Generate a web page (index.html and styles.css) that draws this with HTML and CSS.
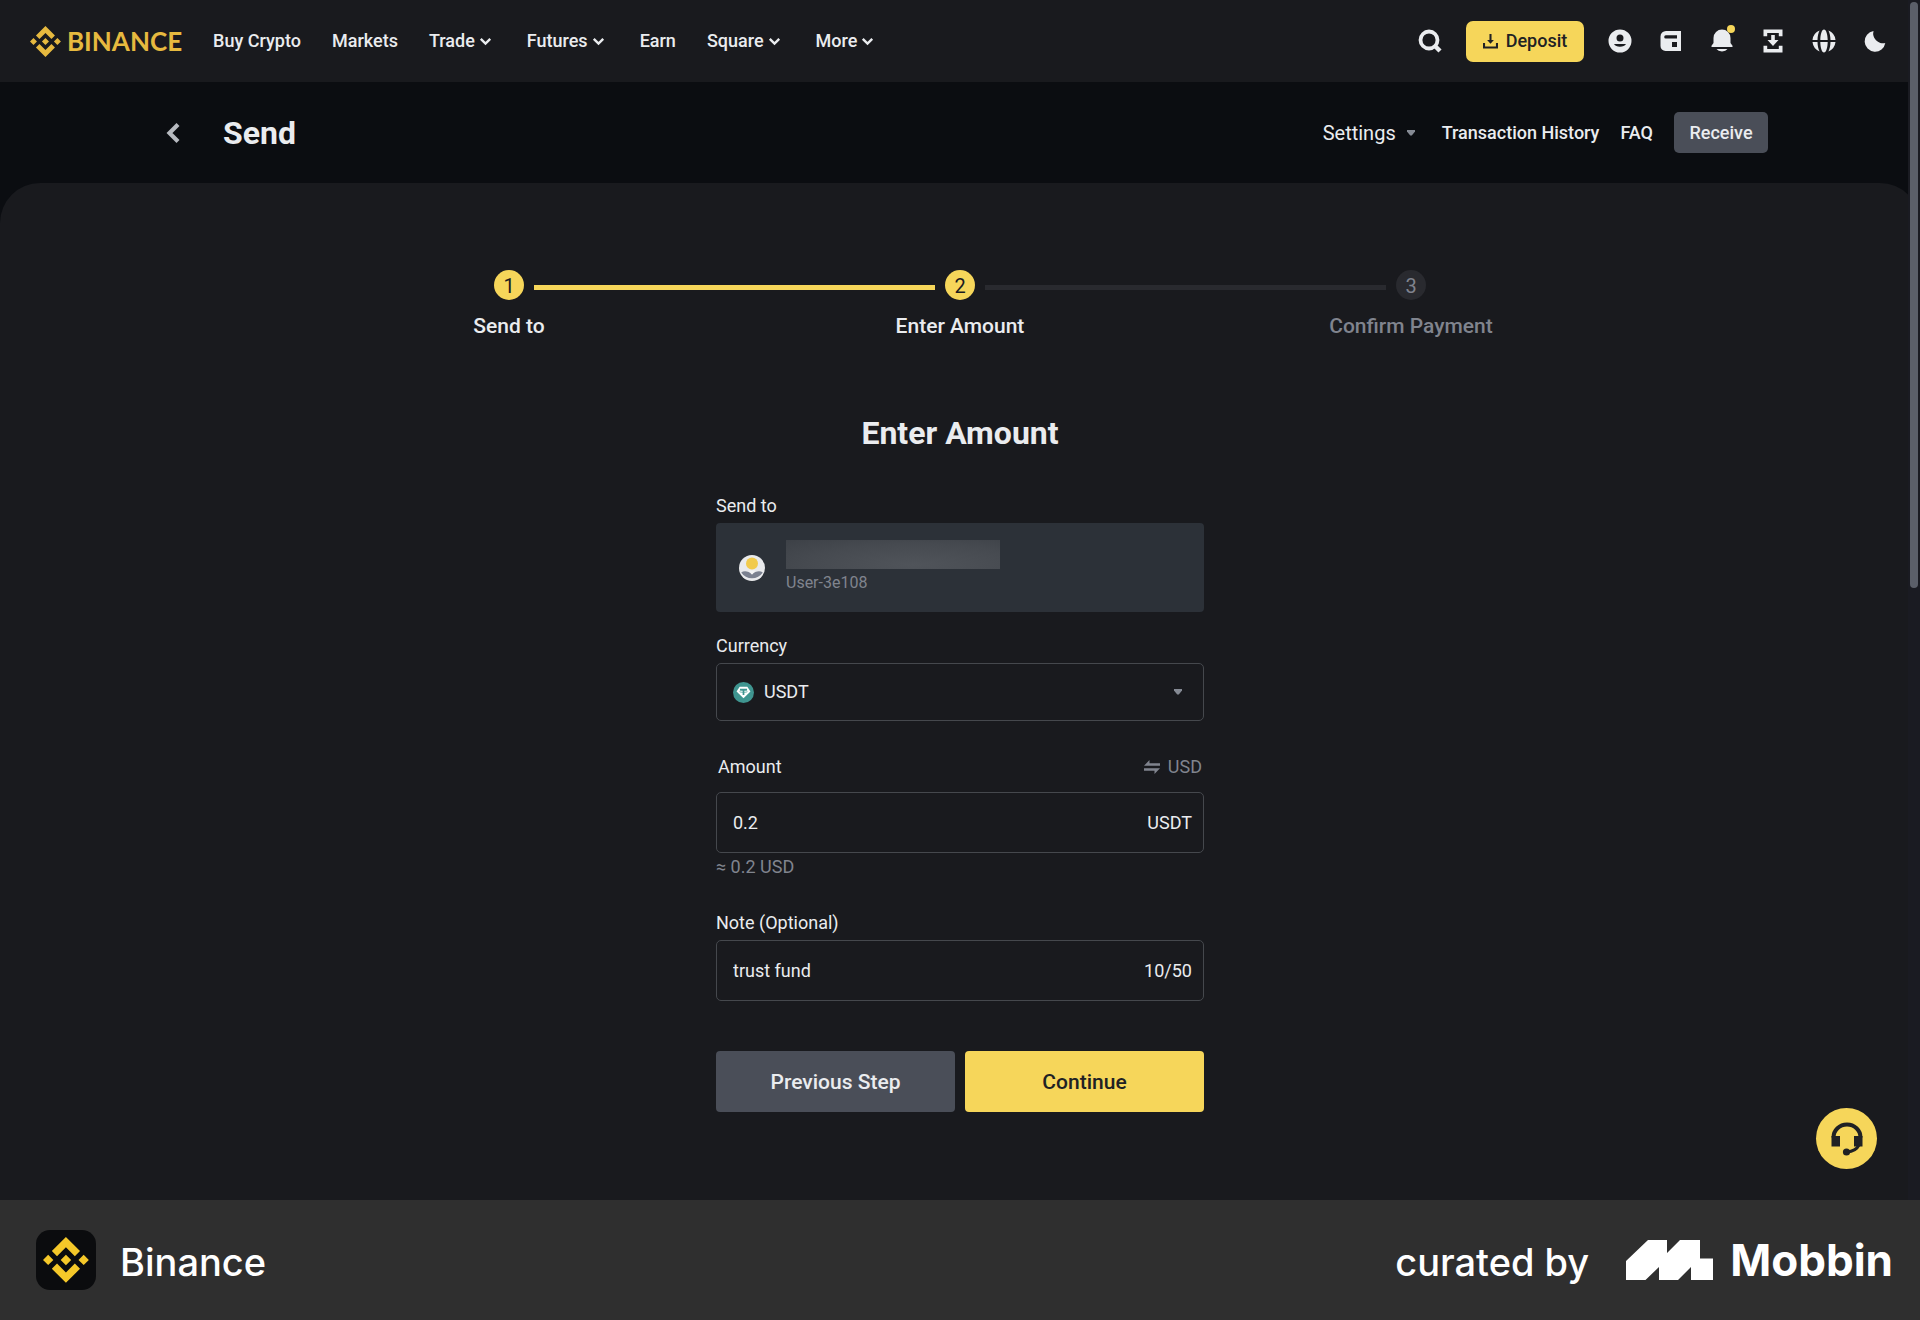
FILE: index.html
```html
<!DOCTYPE html>
<html lang="en">
<head>
<meta charset="utf-8">
<title>Send | Binance</title>
<meta name="viewport" content="width=device-width, initial-scale=1">
<link rel="stylesheet" href="styles.css">
</head>
<body>
<svg class="sprite" aria-hidden="true">
  <symbol id="binance" viewBox="0 0 127 127">
    <path d="M38.7 53.2 63.3 28.6l24.6 24.6 14.3-14.3L63.3 0 24.4 38.9zM0 63.3 14.3 49l14.3 14.3-14.3 14.3zM38.7 73.4 63.3 98l24.6-24.6 14.3 14.3-38.9 38.9-38.9-38.9zM98 63.3 112.3 49l14.3 14.3-14.3 14.3zM77.8 63.3 63.3 48.8 48.8 63.3l14.5 14.5z"/>
  </symbol>
  <symbol id="chevron" viewBox="0 0 20 20">
    <path d="m5.500 7.500 4.500 4.500 4.500-4.500" fill="none" stroke="currentColor" stroke-width="2.300"/>
  </symbol>
  <symbol id="caret" viewBox="0 0 10 6"><path d="M1 0h8v1.500L5.800 5.600H4.200L1 1.500z"/></symbol>
</svg>

<div class="app">
  <header class="topbar">
    <a class="brand" href="#"><svg class="brand-mark"><use href="#binance"/></svg><span>BINANCE</span></a>
    <nav class="menu" aria-label="Main">
      <a href="#">Buy Crypto</a>
      <a href="#">Markets</a>
      <a href="#">Trade<svg><use href="#chevron"/></svg></a>
      <a href="#">Futures<svg><use href="#chevron"/></svg></a>
      <a href="#">Earn</a>
      <a href="#">Square<svg><use href="#chevron"/></svg></a>
      <a href="#">More<svg><use href="#chevron"/></svg></a>
    </nav>
    <div class="actions">
      <button class="icon-btn" type="button" aria-label="Search">
        <svg viewBox="0 0 24 24"><circle cx="11" cy="11" r="8.500" fill="none" stroke="currentColor" stroke-width="3.800"/><path d="m16.500 16.500 5.500 5.500" stroke="currentColor" stroke-width="4.400"/></svg>
      </button>
      <button class="deposit" type="button">
        <svg viewBox="0 0 16 16"><path d="M6.900 0h2.200v6.500h2.500L8 10.400 4.400 6.500h2.500zM0 9.500h2.200v3.800h11.600V9.500H16v6H0z"/></svg>Deposit
      </button>
      <div class="icon-row">
        <button class="icon-btn" type="button" aria-label="Account">
          <svg viewBox="0 0 24 24"><path fill-rule="evenodd" d="M12 .5a11.500 11.500 0 1 0 0 23 11.500 11.500 0 0 0 0-23zm0 5a3.500 3.500 0 1 1 0 7 3.500 3.500 0 0 1 0-7zm-6 9.500h12a6.500 4.300 0 0 1-12 0z"/></svg>
        </button>
        <button class="icon-btn" type="button" aria-label="Wallet">
          <svg viewBox="0 0 24 24"><path fill-rule="evenodd" d="M7 2h15v20H6.500A5 5 0 0 1 1.500 17V7.500A5.500 5.500 0 0 1 7 2zm-.2 4.300a1.600 1.600 0 0 0 0 3.200H18V6.300zM13 13v5h5v-5z"/></svg>
        </button>
        <button class="icon-btn bell" type="button" aria-label="Notifications">
          <svg viewBox="0 0 24 24"><path d="M12 .5a8.500 8.500 0 0 1 8.500 8.500v5l2 2.800V18h-21v-1.200l2-2.800V9A8.500 8.500 0 0 1 12 .5zM6.500 20h11a6 4 0 0 1-11 0z"/></svg>
        </button>
        <button class="icon-btn" type="button" aria-label="Downloads">
          <svg viewBox="0 0 24 24"><path d="M2.500.5h19v6.800h-3.700V4H6.200v3.300H2.500zM2.500 23.500h19v-6.800h-3.700V20H6.200v-3.300H2.500zM10.200 6h3.600v5h3.700L12 17l-5.500-6h3.700z"/></svg>
        </button>
        <button class="icon-btn" type="button" aria-label="Language">
          <svg viewBox="0 0 24 24"><path d="M12 .4c2.200 0 3.600 5 3.700 10.500H8.300C8.400 5.400 9.800.4 12 .4zM12 23.600c-2.200 0-3.600-5-3.700-10.500h7.400c-.1 5.500-1.500 10.500-3.700 10.500zM7.600 1.500A11.500 11.500 0 0 0 .5 10.900h5c.1-3.600.8-7 2.100-9.400zM16.400 1.500a11.500 11.500 0 0 1 7.100 9.400h-5c-.1-3.600-.8-7-2.100-9.400zM7.600 22.500a11.500 11.500 0 0 1-7.100-9.400h5c.1 3.600.8 7 2.100 9.400zM16.400 22.500a11.500 11.500 0 0 0 7.100-9.400h-5c-.1 3.600-.8 7-2.100 9.400z"/></svg>
        </button>
        <button class="icon-btn" type="button" aria-label="Dark mode">
          <svg viewBox="0 0 24 24"><path d="M10.500 2a9.800 9.800 0 0 0 11.800 12A10.400 10.400 0 1 1 10.500 2z"/></svg>
        </button>
      </div>
    </div>
  </header>

  <div class="page-head">
    <div class="page-head-inner">
      <a class="back" href="#" aria-label="Back"><svg viewBox="0 0 14 20"><path d="m12 1.500-8.500 8.500 8.500 8.500" fill="none" stroke="currentColor" stroke-width="4.200"/></svg></a>
      <h1>Send</h1>
      <div class="page-links">
        <button class="settings" type="button">Settings<svg class="caret"><use href="#caret"/></svg></button>
        <a href="#">Transaction History</a>
        <a href="#">FAQ</a>
        <button class="receive" type="button">Receive</button>
      </div>
    </div>
  </div>

  <main class="panel">
    <ol class="steps">
      <li class="step done">
        <div class="track"><i class="line none"></i><span class="dot">1</span><i class="line"></i></div>
        <span>Send to</span>
      </li>
      <li class="step current">
        <div class="track"><i class="line"></i><span class="dot">2</span><i class="line next"></i></div>
        <span>Enter Amount</span>
      </li>
      <li class="step todo">
        <div class="track"><i class="line"></i><span class="dot">3</span><i class="line none"></i></div>
        <span>Confirm Payment</span>
      </li>
    </ol>

    <form class="form">
      <h2>Enter Amount</h2>

      <section class="field">
        <h3 class="label">Send to</h3>
        <div class="recipient">
          <svg class="avatar" viewBox="0 0 26 26">
            <circle cx="13" cy="13" r="13" fill="#e9eaec"/>
            <path d="M2.200 17.500C5 15.500 9.500 16 13 19.500c3.500-3.500 8-4 10.800-2A13 13 0 0 1 2.200 17.500z" fill="#7b8190"/>
            <path d="m9.500 15.500 3.500 4 3.500-4z" fill="#f4f4f5"/>
            <circle cx="13" cy="8.500" r="6" fill="#f1ca4b"/>
          </svg>
          <div class="recipient-text">
            <div class="redacted"></div>
            <span>User-3e108</span>
          </div>
        </div>
      </section>

      <div class="field">
        <label class="label" for="currency">Currency</label>
        <div class="control select">
          <svg class="coin" viewBox="0 0 22 22">
            <circle cx="11" cy="11" r="11" fill="#3f9590"/>
            <path d="M7 5h8l3.300 5L11 17 3.700 10z" fill="#fff"/>
            <path d="M7.300 7.200h7.400v1.700h-2.800v4.600h-1.800V8.900H7.300z" fill="#3f9590"/>
            <ellipse cx="11" cy="10" rx="4" ry="1" fill="none" stroke="#3f9590" stroke-width=".6"/>
          </svg>
          <select id="currency"><option>USDT</option></select>
          <svg class="caret"><use href="#caret"/></svg>
        </div>
      </div>

      <div class="field amount">
        <div class="label-row">
          <label class="label" for="amount">Amount</label>
          <button class="swap" type="button"><svg viewBox="0 0 16 14"><path d="M0 5.800 5.500 0v3.200H16v2.600zM16 8.200 10.500 14v-3.200H0V8.200z"/></svg>USD</button>
        </div>
        <div class="control"><input id="amount" type="text" value="0.2"><span>USDT</span></div>
        <p class="hint">≈ 0.2 USD</p>
      </div>

      <div class="field note">
        <label class="label" for="note">Note (Optional)</label>
        <div class="control"><input id="note" type="text" value="trust fund"><span>10/50</span></div>
      </div>

      <div class="buttons">
        <button class="btn secondary" type="button">Previous Step</button>
        <button class="btn primary" type="submit">Continue</button>
      </div>
    </form>

    <button class="support" type="button" aria-label="Support">
      <svg viewBox="0 0 32 34"><path d="M2.500 15.500a13.500 13 0 0 1 27 0" fill="none" stroke="currentColor" stroke-width="4"/><path d="M.5 14h8.500v10.500H.5zM23 14h8.500v10.500H23z"/><path d="M28 23c-2 4-6 6.500-12 7" fill="none" stroke="currentColor" stroke-width="3"/><circle cx="15.500" cy="30" r="3.600"/></svg>
    </button>
  </main>
  <div class="scrollbar"><div class="thumb"></div></div>
</div>

<footer class="credit">
  <span class="app-icon"><svg><use href="#binance"/></svg></span>
  <span class="credit-text">Binance</span>
  <span class="credit-text curated">curated by</span>
  <a class="mobbin" href="#">
    <svg viewBox="0 0 87 40"><path d="M22 0h19v13L54 0h20v18.500h13V40H65V27L52 40H33V27L19.500 40H0V21z"/></svg>
    <span>Mobbin</span>
  </a>
</footer>
</body>
</html>
```
FILE: styles.css
```css
:root {
  --bg: #191a1e;
  --deep: #0b0d11;
  --text: #eaecef;
  --muted: #80848e;
  --yellow: #f6d65a;
  --grey: #4a4e58;
  --border: #45484d;
}

* { box-sizing: border-box; }

body {
  margin: 0;
  min-height: 100vh;
  display: flex;
  flex-direction: column;
  background: var(--deep);
  color: var(--text);
  font: 18px/24px Roboto, "Liberation Sans", sans-serif;
}

h1, h2, h3, p, ol { margin: 0; padding: 0; }
a { color: inherit; text-decoration: none; }
button, input, select { font: inherit; color: inherit; border: 0; padding: 0; background: none; }
button { cursor: pointer; }
svg { display: block; flex: none; fill: currentColor; }
.sprite { position: absolute; width: 0; height: 0; }

.app { position: relative; flex: 1; display: flex; flex-direction: column; }

/* Top navigation */
.topbar {
  display: flex;
  align-items: center;
  height: 82px;
  padding: 0 33px 0 30px;
  background: var(--bg);
  font-weight: 500;
}
.brand {
  display: flex;
  align-items: center;
  gap: 6px;
  margin-right: 31px;
  color: #e6b93f;
  font: 700 26px/30px Lato, sans-serif;
}
.brand-mark { width: 31px; height: 31px; }
.menu { display: flex; gap: 31px; }
.menu a { display: flex; align-items: center; }
.menu svg { width: 21px; height: 21px; }
.actions { display: flex; align-items: center; gap: 24px; margin-left: auto; }
.icon-row { display: flex; gap: 27px; }
.icon-btn { position: relative; width: 24px; height: 24px; }
.icon-btn svg { width: 24px; height: 24px; }
.bell::after {
  content: "";
  position: absolute;
  top: -4px;
  right: -1px;
  width: 8px;
  height: 8px;
  border-radius: 50%;
  background: var(--yellow);
}
.deposit {
  display: flex;
  align-items: center;
  justify-content: center;
  gap: 8px;
  width: 118px;
  height: 41px;
  border-radius: 7px;
  background: var(--yellow);
  color: #202124;
}
.deposit svg { width: 15px; height: 15px; }

/* Page heading */
.page-head { padding: 0 152px; }
.page-head-inner { display: flex; align-items: center; height: 101px; }
.back { margin: 0 43px 0 14px; color: #b7bac0; }
.back svg { width: 14px; height: 20px; }
h1 { font-size: 32px; line-height: 40px; }
.page-links {
  display: flex;
  align-items: center;
  gap: 21px;
  margin-left: auto;
  font-weight: 500;
}
.settings { display: flex; align-items: center; gap: 10px; margin-right: 5px; font-size: 20px; font-weight: 400; }
.caret { width: 10px; height: 6px; color: #858a94; }
.receive { width: 94px; height: 41px; border-radius: 5px; background: var(--grey); }

/* Content panel */
.panel {
  position: relative;
  flex: 1;
  padding: 87px 20px 87px;
  border-radius: 40px 40px 0 0;
  background: var(--bg);
}

.steps {
  display: flex;
  max-width: 1353px;
  margin: 0 auto 75px;
  list-style: none;
  font-size: 21px;
  font-weight: 500;
}
.step { flex: 1; display: flex; flex-direction: column; align-items: center; gap: 14px; }
.track { display: flex; align-items: center; align-self: stretch; gap: 10px; }
.dot {
  width: 30px;
  height: 30px;
  border-radius: 50%;
  background: var(--yellow);
  color: #1a1b1f;
  font-size: 20px;
  font-weight: 400;
  line-height: 32px;
  text-align: center;
}
.line { flex: 1; height: 5px; margin-top: 4px; background: var(--yellow); }
.todo { color: var(--muted); }
.todo .dot { background: #292a2f; color: var(--muted); }
.todo .line, .line.next { background: #292a2f; }
.step .line.none { background: none; }

/* Form */
.form { max-width: 488px; margin: 0 auto; }
h2 { margin-bottom: 41px; font-size: 32px; line-height: 40px; text-align: center; }
.field { margin-bottom: 22px; }
.label { display: block; margin-bottom: 5px; font-size: 18px; font-weight: 400; }
.recipient {
  display: flex;
  align-items: center;
  gap: 21px;
  height: 89px;
  padding: 0 23px;
  border-radius: 4px;
  background: #2c3138;
}
.avatar { width: 26px; height: 26px; }
.recipient-text { color: var(--muted); font-size: 16px; }
.redacted {
  width: 214px;
  height: 29px;
  margin-bottom: 2px;
  background: radial-gradient(ellipse at 60% 85%, #50545a, #464a50 60%, #3d4147);
}
.control {
  display: flex;
  align-items: center;
  height: 61px;
  padding: 0 11px 0 16px;
  border: 1px solid var(--border);
  border-radius: 5px;
}
.control input, .control select { flex: 1; min-width: 0; height: 100%; appearance: none; outline: 0; }
.control.select { height: 58px; padding-right: 20px; gap: 10px; }
.coin { width: 21px; height: 21px; }
.amount { margin-top: 34px; margin-bottom: 32px; }
.label-row { display: flex; justify-content: space-between; margin-bottom: 13px; padding: 0 2px; }
.label-row .label { margin: 0; }
.swap { display: flex; align-items: center; gap: 8px; color: var(--muted); }
.swap svg { width: 16px; height: 14px; }
.hint { margin-top: 2px; color: var(--muted); }
.note { margin-bottom: 50px; }
.buttons { display: flex; gap: 10px; }
.btn { flex: 1; height: 61px; border-radius: 4px; font-size: 21px; font-weight: 500; }
.secondary { background: var(--grey); }
.primary { background: var(--yellow); color: #202124; }

/* Floating pieces */
.support {
  position: absolute;
  right: 43px;
  bottom: 31px;
  display: grid;
  place-items: center;
  width: 61px;
  height: 61px;
  border-radius: 50%;
  background: var(--yellow);
  color: #202124;
}
.support svg { width: 32px; height: 34px; }
.scrollbar {
  position: absolute;
  inset: 0 0 0 auto;
  width: 12px;
  padding: 2px;
  background: #1a1b22;
}
.thumb { height: 49%; border-radius: 4px; background: #5b5f69; }

/* Credit bar */
.credit {
  display: flex;
  align-items: center;
  height: 120px;
  padding: 0 27px 0 36px;
  background: #2f2f2f;
  color: #fff;
  font: 500 38px/48px Inter, sans-serif;
}
.app-icon {
  display: grid;
  place-items: center;
  width: 60px;
  height: 60px;
  margin-right: 24px;
  border-radius: 14px;
  background: #0b0c0e;
  color: #f5c829;
}
.app-icon svg { width: 46px; height: 46px; }
.credit-text { padding-top: 4px; }
.curated { margin-left: auto; }
.mobbin { display: flex; align-items: center; gap: 17px; margin-left: 37px; font-size: 44px; font-weight: 700; }
.mobbin svg { width: 87px; height: 40px; }
```
